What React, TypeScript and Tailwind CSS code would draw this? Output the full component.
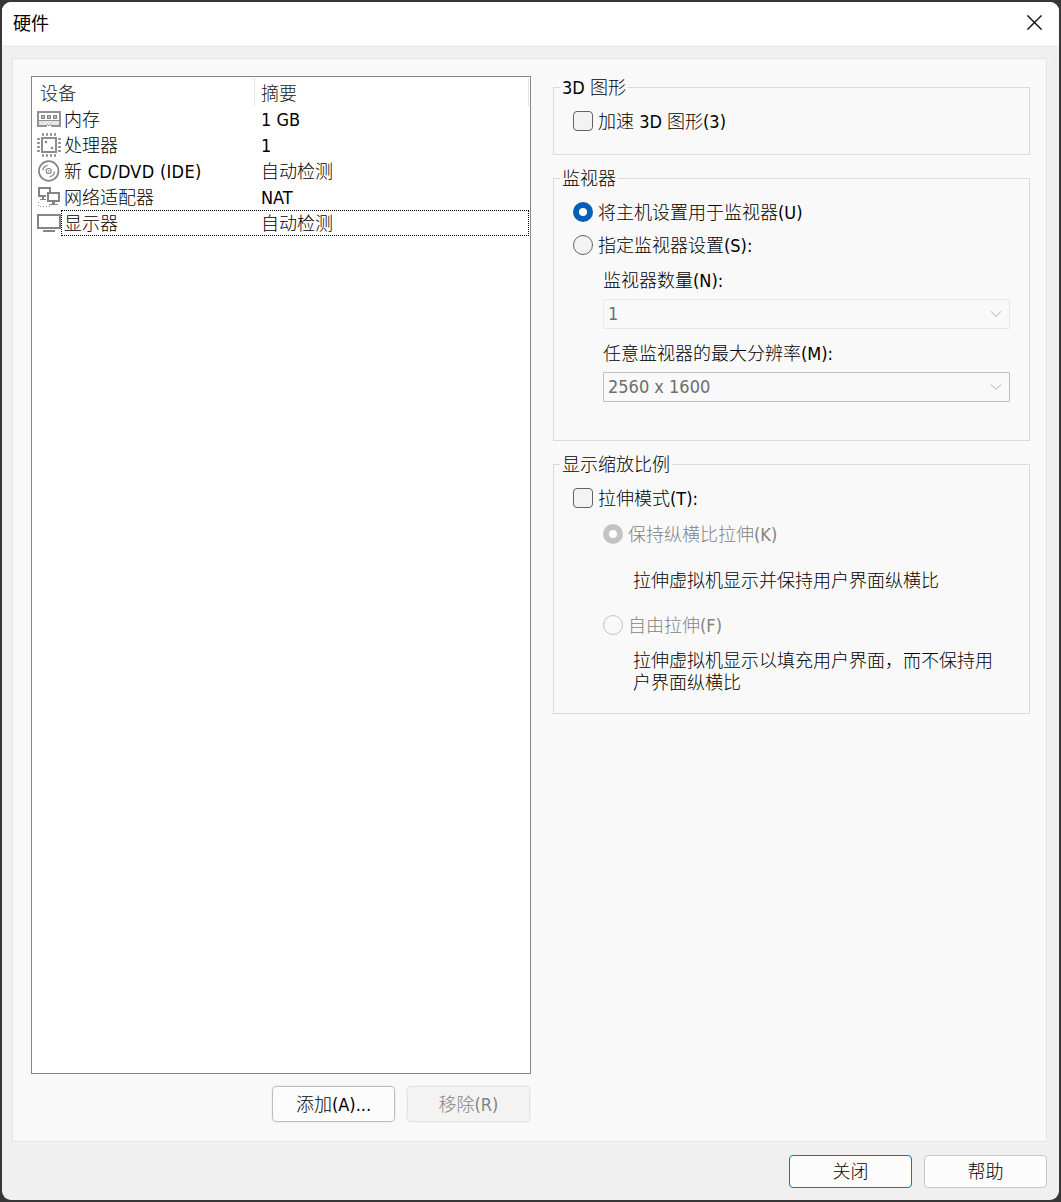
import React from 'react';
import clsx from 'clsx';

interface Device {
  id: string;
  name: string;
  summary: string;
  icon: React.ReactNode;
}

const MemoryIcon = () => (
  <svg width="24" height="26" viewBox="0 0 24 26" fill="none" shapeRendering="crispEdges">
    <path d="M2 15h20v4H2z" fill="#e6e6e6" />
    <path d="M0 5h24v2H0zM0 5h2v16H0zM22 5h2v16h-2zM2 14h20v1H2zM0 19h10v2H0zM14 19h10v2H14z" fill="#929292" />
    <path d="M10 18h1v1h-1zM11 19h2v1h-2zM13 18h1v1h-1z" fill="#929292" />
    <path d="M4 9h4v4H4zM10 9h4v4h-4zM16 9h4v4h-4z" fill="#858585" />
    <path d="M5 10h2v2H5zM11 10h2v2h-2zM17 10h2v2h-2z" fill="#b5b5b5" />
  </svg>
);

const CpuIcon = () => (
  <svg width="24" height="26" viewBox="0 0 24 26" fill="none">
    <rect x="5" y="6" width="14" height="14" stroke="#8c8c8c" strokeWidth="2" />
    <path d="M5 2.5h14M5 23.5h14" stroke="#8c8c8c" strokeWidth="2.4" strokeDasharray="2 2" />
    <path d="M1.5 6v14M22.5 6v14" stroke="#8c8c8c" strokeWidth="2.6" strokeDasharray="2 2" />
    <circle cx="9" cy="10" r="1.3" fill="#858585" />
    <circle cx="15" cy="16" r="1.3" fill="#858585" />
  </svg>
);

const DiscIcon = () => (
  <svg width="24" height="26" viewBox="0 0 24 26" fill="none" stroke="#858585">
    <circle cx="11.7" cy="13" r="9.8" strokeWidth="1.7" />
    <circle cx="11.7" cy="13" r="2.5" strokeWidth="1.2" />
    <path d="M5.8 12.5A6 6 0 0 1 10.7 7.3M17.6 13.5A6 6 0 0 1 12.7 18.7" strokeWidth="1.3" />
    <circle cx="11.7" cy="13" r="0.7" fill="#777" stroke="none" />
  </svg>
);

const NetworkIcon = () => (
  <svg width="24" height="26" viewBox="0 0 24 26" fill="none" shapeRendering="crispEdges">
    <path d="M9 12H2V4h11v4" stroke="#858585" strokeWidth="2" />
    <path d="M5 13h2v2H5zM3 15h6v1H3z" fill="#858585" />
    <rect x="11" y="9" width="11" height="8" fill="#fff" stroke="#858585" strokeWidth="2" />
    <path d="M15 18h3v2h-3zM12 20h9v1h-9z" fill="#858585" />
    <path d="M1.5 18v4.5H15" stroke="#999" strokeDasharray="1 2" />
  </svg>
);

const DisplayIcon = () => (
  <svg width="24" height="26" viewBox="0 0 24 26" fill="none" shapeRendering="crispEdges">
    <rect x="1" y="5" width="22" height="13" stroke="#858585" strokeWidth="2" />
    <path d="M6 20h12v2H6z" fill="#858585" />
  </svg>
);

const devices: Device[] = [
  { id: 'memory', name: '内存', summary: '1 GB', icon: <MemoryIcon /> },
  { id: 'cpu', name: '处理器', summary: '1', icon: <CpuIcon /> },
  { id: 'cd', name: '新 CD/DVD (IDE)', summary: '自动检测', icon: <DiscIcon /> },
  { id: 'network', name: '网络适配器', summary: 'NAT', icon: <NetworkIcon /> },
  { id: 'display', name: '显示器', summary: '自动检测', icon: <DisplayIcon /> },
];

function Group({
  title,
  className,
  children,
}: {
  title: string;
  className?: string;
  children: React.ReactNode;
}) {
  return (
    <section className={clsx('flex flex-col border border-[#dcdcdc]', className)}>
      <h3 className="-mt-[11px] ml-1.5 h-[22px] w-fit bg-[#f9f9f9] px-0.5 font-light">{title}</h3>
      {children}
    </section>
  );
}

function Checkbox({ label, className }: { label: string; className?: string }) {
  return (
    <label className={clsx('flex h-[26px] items-center', className)}>
      <span className="mr-[5px] size-5 rounded-[4px] border border-[#626262] bg-[#f3f3f3]" />
      <span className="pt-0.5">{label}</span>
    </label>
  );
}

function Radio({
  label,
  checked,
  disabled,
  className,
}: {
  label: string;
  checked?: boolean;
  disabled?: boolean;
  className?: string;
}) {
  return (
    <label
      className={clsx('flex h-[26px] items-center', disabled && 'text-[#838383]', className)}
    >
      <span
        className={clsx(
          'mr-[5px] flex size-5 items-center justify-center rounded-full',
          checked && (disabled ? 'bg-[#c3c3c3]' : 'bg-[#005fb8]'),
          !checked && (disabled ? 'border border-[#c3c3c3]' : 'border border-[#626262] bg-[#f3f3f3]'),
        )}
      >
        {checked && <span className="size-2 rounded-full bg-white" />}
      </span>
      <span className="pt-0.5">{label}</span>
    </label>
  );
}

function Combo({ value, className }: { value: string; className?: string }) {
  return (
    <div
      className={clsx(
        'mt-[7px] ml-[49px] flex h-[30px] w-[407px] items-center justify-between rounded-[1px] border pr-[7px] pl-1 text-[#6d6d6d]',
        className,
      )}
    >
      <span>{value}</span>
      <svg width="12" height="8" viewBox="0 0 12 8" fill="none" stroke="#b0b0b0">
        <path d="M0.7 1.2 6 6.3l5.3-5.1" />
      </svg>
    </div>
  );
}

function Button({ label, className }: { label: string; className?: string }) {
  return (
    <button
      className={clsx(
        'flex w-[123px] items-center justify-center rounded-[4px] border font-light',
        className,
      )}
    >
      {label}
    </button>
  );
}

export default function App() {
  return (
    <div className="h-[1202px] w-[1061px] bg-[#373737] p-0.5 font-['DejaVu_Sans_Condensed','Noto_Sans_CJK_SC',sans-serif] text-[18px] leading-[22px] font-light text-black">
      <div className="flex h-full w-[1057px] flex-col overflow-hidden rounded-[9px] bg-[#f0f0f0]">
        <header className="flex h-[43px] shrink-0 items-center justify-between bg-white pr-[17px] pl-[11px]">
          <h1 className="pb-1 font-['Noto_Sans_CJK_SC',sans-serif] font-normal">硬件</h1>
          <svg
            className="mb-0.5"
            width="15"
            height="15"
            viewBox="0 0 15 15"
            fill="none"
            stroke="#111"
            strokeWidth="1.4"
          >
            <path d="M0.4 0.4l14.2 14.2M14.6 0.4L0.4 14.6" />
          </svg>
        </header>

        <main className="mt-[13px] ml-2.5 flex h-[1084px] w-[1035px] shrink-0 border border-[#e5e5e5] bg-[#f9f9f9] pt-[17px] pl-[18px] shadow-[2px_2px_0_#f3f3f3]">
          <div className="flex w-[500px] flex-col">
            <div className="h-[998px] border border-[#828790] bg-white">
              <div className="flex h-[29px] pt-px text-[#222]">
                <span className="w-[223px] border-r border-[#e5e5e5] pt-[5px] pl-2">设备</span>
                <span className="w-[274px] border-r border-[#e5e5e5] pt-[5px] pl-[6px]">摘要</span>
              </div>
              {devices.map((device) => (
                <div key={device.id} className="flex h-[26px] pl-[5px]">
                  {device.icon}
                  <div
                    className={clsx(
                      'flex w-[468px] items-center border pt-0.5',
                      device.id === 'display' ? 'border-dotted border-black' : 'border-transparent',
                    )}
                  >
                    <span
                      className={clsx('w-[199px] pl-0.5', device.id === 'cd' && 'tracking-[0.3px]')}
                    >
                      {device.name}
                    </span>
                    <span>{device.summary}</span>
                  </div>
                </div>
              ))}
            </div>
            <div className="mt-3 flex justify-end gap-3 pr-px">
              <Button
                label="添加(A)..."
                className="h-9 border-[#bdbdbd] bg-[#fcfcfc] pt-0.5 outline outline-[#f0f0f0]"
              />
              <Button
                label="移除(R)"
                className="h-9 border-[#e3e3e3] bg-[#f3f3f3] pt-0.5 text-[#838383] outline outline-[#f0f0f0]"
              />
            </div>
          </div>

          <div className="mt-[11px] ml-[22px] w-[477px]">
            <Group title="3D 图形" className="h-[68px]">
              <Checkbox label="加速 3D 图形(3)" className="mt-[9px] ml-[19px]" />
            </Group>

            <Group title="监视器" className="mt-[23px] h-[263px]">
              <Radio label="将主机设置用于监视器(U)" checked className="mt-[9px] ml-[19px]" />
              <Radio label="指定监视器设置(S):" className="mt-[7px] ml-[19px]" />
              <p className="mt-3 ml-[49px]">监视器数量(N):</p>
              <Combo value="1" className="border-[#e8e8e8]" />
              <p className="mt-3.5 ml-[49px]">任意监视器的最大分辨率(M):</p>
              <Combo value="2560 x 1600" className="border-[#c0c0c0]" />
            </Group>

            <Group title="显示缩放比例" className="mt-[23px] h-[250px]">
              <Checkbox label="拉伸模式(T):" className="mt-[9px] ml-[19px]" />
              <Radio label="保持纵横比拉伸(K)" checked disabled className="mt-2.5 ml-[49px]" />
              <p className="mt-[23px] ml-[79px]">拉伸虚拟机显示并保持用户界面纵横比</p>
              <Radio label="自由拉伸(F)" disabled className="mt-5 ml-[49px]" />
              <p className="mt-3 ml-[79px] w-[362px]">
                拉伸虚拟机显示以填充用户界面，而不保持用户界面纵横比
              </p>
            </Group>
          </div>
        </main>

        <footer className="mt-[13px] flex gap-3 pl-[787px]">
          <Button label="关闭" className="h-[33px] border-[#0078d4] bg-[#fcfcfc]" />
          <Button label="帮助" className="h-[33px] border-[#c8c8c8] bg-[#fcfcfc]" />
        </footer>
      </div>
    </div>
  );
}
